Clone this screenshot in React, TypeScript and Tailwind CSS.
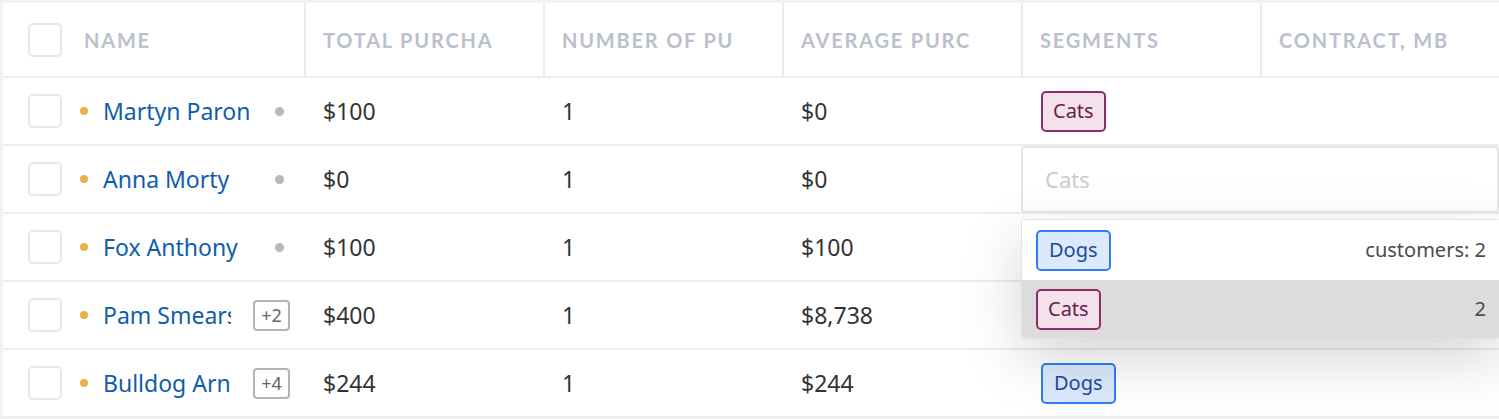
import { Fragment } from 'react';

type Segment = 'Cats' | 'Dogs';

interface Customer {
  id: number;
  name: string;
  extra: string | null;
  total: string;
  count: string;
  average: string;
  segment: Segment | null;
}

const customers: Customer[] = [
  { id: 1, name: 'Martyn Paron', extra: null, total: '$100', count: '1', average: '$0', segment: 'Cats' },
  { id: 2, name: 'Anna Morty', extra: null, total: '$0', count: '1', average: '$0', segment: null },
  { id: 3, name: 'Fox Anthony', extra: null, total: '$100', count: '1', average: '$100', segment: null },
  { id: 4, name: 'Pam Smears', extra: '+2', total: '$400', count: '1', average: '$8,738', segment: null },
  { id: 5, name: 'Bulldog Arnold', extra: '+4', total: '$244', count: '1', average: '$244', segment: 'Dogs' },
];

// header labels as they show in the narrow columns
const headers = ['Name', 'Total purcha', 'Number of pu', 'Average purc', 'Segments', 'Contract, MB'];

function Checkbox() {
  return <div className="w-[34px] h-[34px] shrink-0 rounded-[5px] border-2 border-[#e8e8e8] bg-white" />;
}

function SegmentBadge({ segment }: { segment: Segment }) {
  return segment === 'Cats' ? (
    <span className="inline-flex items-center h-[41px] px-[10px] rounded-[5px] border-2 border-[#8f2c66] bg-[#f3e2ec] text-[#6b1d4c] text-[20px]">
      Cats
    </span>
  ) : (
    <span className="inline-flex items-center h-[41px] px-[11px] rounded-[5px] border-2 border-[#2f7df7] bg-[#dce9fd] text-[#1b4b9c] text-[20px]">
      Dogs
    </span>
  );
}

export default function App() {
  return (
    <div
      className="w-[1499px] h-[419px] overflow-hidden bg-[#f2f2f2] pt-[3px] pl-[3px]"
      style={{ fontFamily: '"Noto Sans", "Open Sans", sans-serif' }}
    >
      <div className="grid grid-cols-[301px_239px_239px_239px_239px_239px] bg-white">
        {/* Header */}
        {headers.map((h, i) => (
          <div
            key={h}
            className={`h-[75px] flex items-center border-b-2 border-[#ededed] ${i > 0 ? 'border-l-2 border-l-[#ebebeb] pl-[17px]' : 'pl-[25px]'}`}
          >
            {i === 0 && <Checkbox />}
            <span
              className={`block whitespace-nowrap text-[20px] font-bold uppercase tracking-[0.09em] text-[#bac0cc] ${i === 0 ? 'ml-[22px]' : ''}`}
              style={{ fontFamily: 'Lato, "Noto Sans", sans-serif' }}
            >
              {h}
            </span>
          </div>
        ))}

        {/* Rows */}
        {customers.map((c) => (
          <Fragment key={c.id}>
            <div className="h-[68px] flex items-center pl-[25px] border-b-2 border-[#ededed]">
              <Checkbox />
              <span className="ml-[18px] w-[8px] h-[8px] rounded-full bg-[#e8b14a] shrink-0" />
              <span
                className={`ml-[15px] shrink-0 overflow-hidden whitespace-nowrap text-[23px] text-[#0f5dab] ${c.extra ? 'w-[128px]' : 'w-[146px]'}`}
              >
                {c.name}
              </span>
              {c.extra ? (
                <span className="ml-[22px] h-[31px] w-[37px] flex items-center justify-center rounded-[4px] border-2 border-[#b4b4b4] text-[18px] text-[#666]">
                  {c.extra}
                </span>
              ) : (
                <span className="ml-[26px] w-[9px] h-[9px] rounded-full bg-[#b8b8b8]" />
              )}
            </div>
            <div className="h-[68px] flex items-center pl-[19px] border-b-2 border-[#ededed] text-[23px] text-[#333]">{c.total}</div>
            <div className="h-[68px] flex items-center pl-[19px] border-b-2 border-[#ededed] text-[23px] text-[#333]">{c.count}</div>
            <div className="h-[68px] flex items-center pl-[19px] border-b-2 border-[#ededed] text-[23px] text-[#333]">{c.average}</div>
            {c.id === 2 ? (
              <div className="relative col-span-2 h-[68px] border-b-2 border-[#ededed]">
                <div className="h-[67px] flex items-center pl-[22px] rounded-[4px] border-2 border-[#e6e6e6] bg-white text-[22px] text-[#cccccc]">
                  Cats
                </div>
                {/* Dropdown */}
                <div className="absolute left-0 top-[73px] w-[480px] z-10 rounded-[4px] border border-[#e3e3e3] bg-white overflow-hidden shadow-[0_20px_60px_rgba(0,0,0,0.17)]">
                  <div className="h-[60px] flex items-center justify-between pl-[14px] pr-[14px] bg-white">
                    <SegmentBadge segment="Dogs" />
                    <span className="text-[20px] text-[#4a4a4a]">customers: 2</span>
                  </div>
                  <div className="h-[58px] flex items-center justify-between pl-[14px] pr-[14px] bg-[#dcdcdc]">
                    <SegmentBadge segment="Cats" />
                    <span className="text-[20px] text-[#4a4a4a]">2</span>
                  </div>
                </div>
              </div>
            ) : (
              <>
                <div className="h-[68px] flex items-center pl-[20px] border-b-2 border-[#ededed]">
                  {c.segment && <SegmentBadge segment={c.segment} />}
                </div>
                <div className="h-[68px] border-b-2 border-[#ededed]" />
              </>
            )}
          </Fragment>
        ))}
      </div>
    </div>
  );
}
